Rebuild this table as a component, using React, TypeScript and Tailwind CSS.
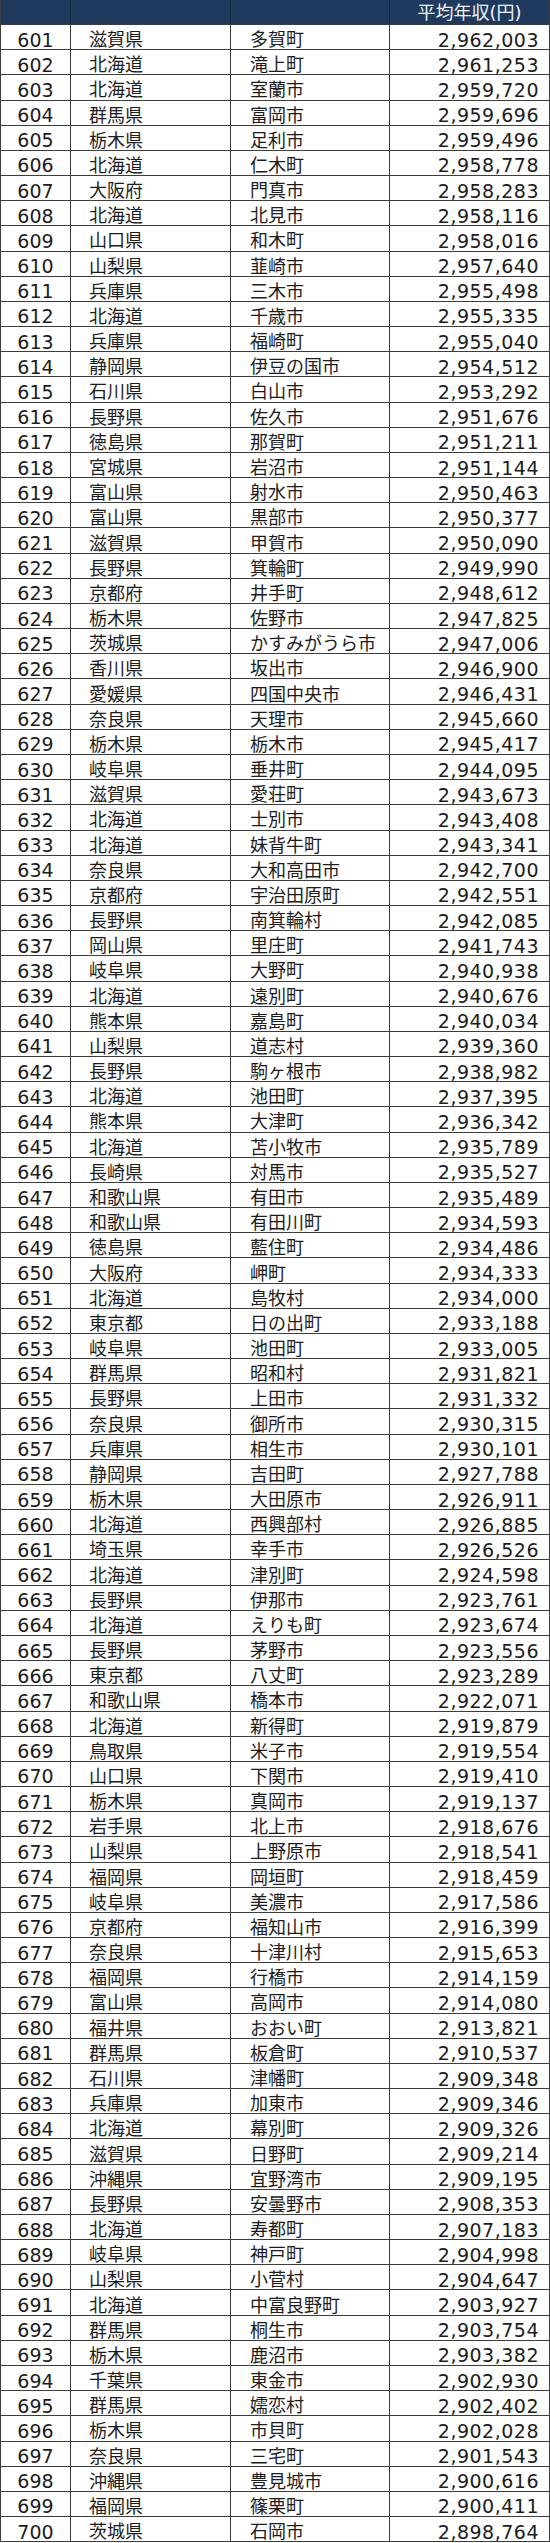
import React from 'react';

const RAW = `滋賀県 多賀町 2,962,003
北海道 滝上町 2,961,253
北海道 室蘭市 2,959,720
群馬県 富岡市 2,959,696
栃木県 足利市 2,959,496
北海道 仁木町 2,958,778
大阪府 門真市 2,958,283
北海道 北見市 2,958,116
山口県 和木町 2,958,016
山梨県 韮崎市 2,957,640
兵庫県 三木市 2,955,498
北海道 千歳市 2,955,335
兵庫県 福崎町 2,955,040
静岡県 伊豆の国市 2,954,512
石川県 白山市 2,953,292
長野県 佐久市 2,951,676
徳島県 那賀町 2,951,211
宮城県 岩沼市 2,951,144
富山県 射水市 2,950,463
富山県 黒部市 2,950,377
滋賀県 甲賀市 2,950,090
長野県 箕輪町 2,949,990
京都府 井手町 2,948,612
栃木県 佐野市 2,947,825
茨城県 かすみがうら市 2,947,006
香川県 坂出市 2,946,900
愛媛県 四国中央市 2,946,431
奈良県 天理市 2,945,660
栃木県 栃木市 2,945,417
岐阜県 垂井町 2,944,095
滋賀県 愛荘町 2,943,673
北海道 士別市 2,943,408
北海道 妹背牛町 2,943,341
奈良県 大和高田市 2,942,700
京都府 宇治田原町 2,942,551
長野県 南箕輪村 2,942,085
岡山県 里庄町 2,941,743
岐阜県 大野町 2,940,938
北海道 遠別町 2,940,676
熊本県 嘉島町 2,940,034
山梨県 道志村 2,939,360
長野県 駒ヶ根市 2,938,982
北海道 池田町 2,937,395
熊本県 大津町 2,936,342
北海道 苫小牧市 2,935,789
長崎県 対馬市 2,935,527
和歌山県 有田市 2,935,489
和歌山県 有田川町 2,934,593
徳島県 藍住町 2,934,486
大阪府 岬町 2,934,333
北海道 島牧村 2,934,000
東京都 日の出町 2,933,188
岐阜県 池田町 2,933,005
群馬県 昭和村 2,931,821
長野県 上田市 2,931,332
奈良県 御所市 2,930,315
兵庫県 相生市 2,930,101
静岡県 吉田町 2,927,788
栃木県 大田原市 2,926,911
北海道 西興部村 2,926,885
埼玉県 幸手市 2,926,526
北海道 津別町 2,924,598
長野県 伊那市 2,923,761
北海道 えりも町 2,923,674
長野県 茅野市 2,923,556
東京都 八丈町 2,923,289
和歌山県 橋本市 2,922,071
北海道 新得町 2,919,879
鳥取県 米子市 2,919,554
山口県 下関市 2,919,410
栃木県 真岡市 2,919,137
岩手県 北上市 2,918,676
山梨県 上野原市 2,918,541
福岡県 岡垣町 2,918,459
岐阜県 美濃市 2,917,586
京都府 福知山市 2,916,399
奈良県 十津川村 2,915,653
福岡県 行橋市 2,914,159
富山県 高岡市 2,914,080
福井県 おおい町 2,913,821
群馬県 板倉町 2,910,537
石川県 津幡町 2,909,348
兵庫県 加東市 2,909,346
北海道 幕別町 2,909,326
滋賀県 日野町 2,909,214
沖縄県 宜野湾市 2,909,195
長野県 安曇野市 2,908,353
北海道 寿都町 2,907,183
岐阜県 神戸町 2,904,998
山梨県 小菅村 2,904,647
北海道 中富良野町 2,903,927
群馬県 桐生市 2,903,754
栃木県 鹿沼市 2,903,382
千葉県 東金市 2,902,930
群馬県 嬬恋村 2,902,402
栃木県 市貝町 2,902,028
奈良県 三宅町 2,901,543
沖縄県 豊見城市 2,900,616
福岡県 篠栗町 2,900,411
茨城県 石岡市 2,898,764`;

const rows = RAW.split('\n').map((line, i) => {
  const [pref, city, income] = line.split(' ');
  return { rank: 601 + i, pref, city, income };
});

// excel-ish cells: text sits a little below the middle
const cell = 'flex items-center h-full shrink-0 border-r border-[#3d3d3d] pt-[6px] leading-none whitespace-nowrap';

export default function App() {
  return (
    <div className="w-[550px] bg-white text-[#1c1c1c] font-['DejaVu_Sans','Noto_Sans_CJK_JP',sans-serif]">
      <div className="flex flex-col border-l border-[#3d3d3d]">
        <div className="flex h-[25px] shrink-0 bg-[#203a5e] border-b border-[#3d3d3d]">
          <div className="w-[70px] border-r border-[#17283f]" />
          <div className="w-[160px] border-r border-[#17283f]" />
          <div className="w-[159px] border-r border-[#17283f]" />
          <div className="w-[160px] flex items-center justify-center border-r border-[#3d3d3d] text-[18px] leading-none text-[#eef2f7] pt-[2px]">
            平均年収(円)
          </div>
        </div>
        {rows.map((r) => (
          <div key={r.rank} className="flex h-[25.18px] shrink-0 border-b border-[#3d3d3d]">
            <div className={`${cell} w-[70px] justify-center text-[19px]`}>{r.rank}</div>
            <div className={`${cell} w-[160px] pl-[18px] text-[18px]`}>{r.pref}</div>
            <div className={`${cell} w-[159px] pl-[19px] text-[18px]`}>{r.city}</div>
            <div className={`${cell} w-[160px] justify-end pr-[10px] text-[19px] tracking-[0.5px]`}>{r.income}</div>
          </div>
        ))}
      </div>
    </div>
  );
}
